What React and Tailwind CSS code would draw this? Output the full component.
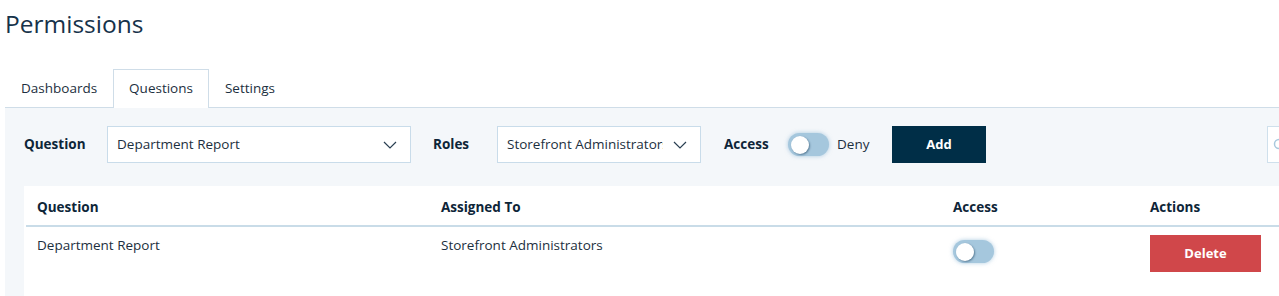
import React from 'react';

const Chevron = () => (
  <svg width="14" height="8" viewBox="0 0 14 8" fill="none" className="shrink-0">
    <path d="M1 1l6 6 6-6" stroke="#2a3f52" strokeWidth="1.2" />
  </svg>
);

const Toggle = () => (
  <div className="relative h-[23px] w-[41px] shrink-0 rounded-full bg-[#a5c7dd] shadow-[0_0_4px_rgba(120,170,205,0.6)]">
    <div className="absolute left-[3px] top-[2.5px] h-[18px] w-[18px] rounded-full bg-white shadow-[1px_1px_2px_rgba(0,40,70,0.45)]" />
  </div>
);

const Select = ({ value, width }) => (
  <div className={`flex h-[37px] shrink-0 items-center justify-between gap-[10px] border border-[#c9dcea] bg-white pl-[9px] pr-[13px] ${width}`}>
    <span className="overflow-hidden whitespace-nowrap text-[13.5px] text-[#1c2f40]">{value}</span>
    <Chevron />
  </div>
);

export default function App() {
  const tabs = ['Dashboards', 'Questions', 'Settings'];
  const rows = [{ question: 'Department Report', assigned: 'Storefront Administrators' }];

  return (
    <div className="h-[296px] w-[1279px] overflow-hidden bg-white font-['Open_Sans',sans-serif] text-[#1c2f40]">
      <h1 className="pl-[5px] pt-[6px] text-[24.5px] leading-[36px] text-[#16324a]">Permissions</h1>

      {/* tabs */}
      <div className="ml-[5px] mt-[27px] flex h-[39px] w-[1400px] border-b border-[#cfdde8]">
        {tabs.map((t) => (
          <div
            key={t}
            className={
              t === 'Questions'
                ? '-mb-px flex items-center border border-b-0 border-[#cfdde8] bg-white px-[15px] pb-[2px] text-[13.5px] text-[#1c2f40]'
                : 'flex items-center px-[16px] text-[13.5px] text-[#1c2f40]'
            }
          >
            {t}
          </div>
        ))}
      </div>

      {/* panel */}
      <div className="ml-[5px] h-[200px] w-[1400px] bg-[#f4f7fa] pl-[19px] pt-[18px]">
        <div className="flex h-[37px] items-center">
          <span className="w-[83px] shrink-0 text-[13.5px] font-bold text-[#0d2538]">Question</span>
          <Select value="Department Report" width="w-[304px]" />
          <span className="ml-[22px] w-[64px] shrink-0 text-[13.5px] font-bold text-[#0d2538]">Roles</span>
          <Select value="Storefront Administrators" width="w-[204px]" />
          <span className="ml-[23px] w-[64px] shrink-0 text-[13.5px] font-bold text-[#0d2538]">Access</span>
          <Toggle />
          <span className="ml-[8px] w-[32px] shrink-0 text-[13.5px]">Deny</span>
          <button className="ml-[23px] h-[37px] w-[94px] shrink-0 bg-[#002e47] text-[13px] font-bold text-white">Add</button>
          <div className="ml-[281px] flex h-[37px] w-[100px] shrink-0 items-center border border-[#cfe0ec] bg-white pl-[5px]">
            <svg width="14" height="14" viewBox="0 0 14 14" fill="none">
              <circle cx="6" cy="6" r="4.5" stroke="#a9c9de" strokeWidth="1.5" />
              <path d="M9.5 9.5l3 3" stroke="#a9c9de" strokeWidth="1.5" />
            </svg>
          </div>
        </div>

        {/* table */}
        <div className="mt-[23px] h-[200px] bg-white px-[2px]">
          <div className="grid h-[41px] grid-cols-[404px_512px_197px_1fr] items-center border-b-2 border-[#c9dce8] pt-[3px] text-[13.5px] font-bold text-[#0d2538]">
            <div className="pl-[11px]">Question</div>
            <div className="pl-[11px]">Assigned To</div>
            <div className="pl-[11px]">Access</div>
            <div className="pl-[11px]">Actions</div>
          </div>
          {rows.map((r) => (
            <div key={r.question} className="grid grid-cols-[404px_512px_197px_1fr] items-start pt-[8px] text-[13.5px]">
              <div className="pl-[11px] leading-[20px]">{r.question}</div>
              <div className="pl-[11px] leading-[20px]">{r.assigned}</div>
              <div className="pl-[11px] pt-[5px]">
                <Toggle />
              </div>
              <div className="pl-[11px]">
                <button className="h-[37px] w-[111px] bg-[#d0474a] text-[13px] font-bold text-white">Delete</button>
              </div>
            </div>
          ))}
        </div>
      </div>
    </div>
  );
}
